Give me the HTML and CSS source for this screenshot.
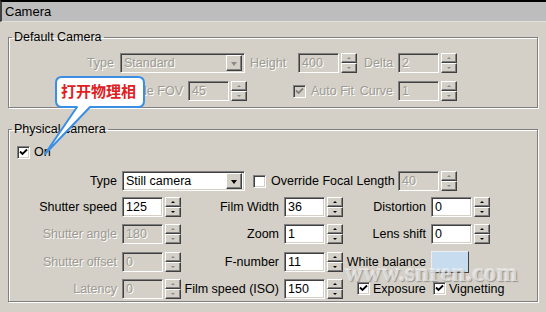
FILE: index.html
```html
<!DOCTYPE html>
<html>
<head>
<meta charset="utf-8">
<link rel="stylesheet" href="styles.css">
</head>
<body>
<div class="header">Camera</div>
<div class="panel">
  <fieldset class="group g-default">
    <legend>Default Camera</legend>
    <div class="row r-d1">
      <span class="lbl dis c-l1">Type</span>
      <div class="select dis w-sel1"><span class="sel-text">Standard</span><span class="ddbtn"><i></i></span></div>
      <span class="lbl dis c-h">Height</span>
      <div class="spin dis"><span class="field">400</span><span class="sbtns"><span class="sb up"><i></i></span><span class="sb dn"><i></i></span></span></div>
      <span class="lbl dis c-d">Delta</span>
      <div class="spin dis"><span class="field">2</span><span class="sbtns"><span class="sb up"><i></i></span><span class="sb dn"><i></i></span></span></div>
    </div>
    <div class="row r-d2">
      <span class="lbl dis c-fov">Override FOV</span>
      <div class="spin dis"><span class="field">45</span><span class="sbtns"><span class="sb up"><i></i></span><span class="sb dn"><i></i></span></span></div>
      <span class="chk dis c-af"><span class="box on"><svg viewBox="0 0 9 9" width="9" height="9"><path d="M1 3.5 L3.5 6 L8 1.5" /></svg></span><span class="lbl">Auto Fit</span></span>
      <span class="lbl dis c-curve">Curve</span>
      <div class="spin dis"><span class="field">1</span><span class="sbtns"><span class="sb up"><i></i></span><span class="sb dn"><i></i></span></span></div>
    </div>
  </fieldset>

  <fieldset class="group g-phys">
    <legend>Physical camera</legend>
    <div class="row r-on">
      <span class="chk"><span class="box on"><svg viewBox="0 0 9 9" width="9" height="9"><path d="M1 3.5 L3.5 6 L8 1.5" /></svg></span><span class="lbl">On</span></span>
    </div>
    <div class="row r-type">
      <span class="lbl c-l1p">Type</span>
      <div class="select w-sel2"><span class="sel-text">Still camera</span><span class="ddbtn"><i></i></span></div>
      <span class="chk c-ofl"><span class="box"></span><span class="lbl">Override Focal Length</span></span>
      <div class="spin dis"><span class="field">40</span><span class="sbtns"><span class="sb up"><i></i></span><span class="sb dn"><i></i></span></span></div>
    </div>
    <div class="grid">
      <span class="lbl c-l1p">Shutter speed</span>
      <div class="spin"><span class="field">125</span><span class="sbtns"><span class="sb up"><i></i></span><span class="sb dn"><i></i></span></span></div>
      <span class="lbl c-l2">Film Width</span>
      <div class="spin"><span class="field">36</span><span class="sbtns"><span class="sb up"><i></i></span><span class="sb dn"><i></i></span></span></div>
      <span class="lbl c-l3">Distortion</span>
      <div class="spin"><span class="field">0</span><span class="sbtns"><span class="sb up"><i></i></span><span class="sb dn"><i></i></span></span></div>

      <span class="lbl dis c-l1p">Shutter angle</span>
      <div class="spin dis"><span class="field">180</span><span class="sbtns"><span class="sb up"><i></i></span><span class="sb dn"><i></i></span></span></div>
      <span class="lbl c-l2">Zoom</span>
      <div class="spin"><span class="field">1</span><span class="sbtns"><span class="sb up"><i></i></span><span class="sb dn"><i></i></span></span></div>
      <span class="lbl c-l3">Lens shift</span>
      <div class="spin"><span class="field">0</span><span class="sbtns"><span class="sb up"><i></i></span><span class="sb dn"><i></i></span></span></div>

      <span class="lbl dis c-l1p">Shutter offset</span>
      <div class="spin dis"><span class="field">0</span><span class="sbtns"><span class="sb up"><i></i></span><span class="sb dn"><i></i></span></span></div>
      <span class="lbl c-l2">F-number</span>
      <div class="spin"><span class="field">11</span><span class="sbtns"><span class="sb up"><i></i></span><span class="sb dn"><i></i></span></span></div>
      <span class="lbl c-l3">White balance</span>
      <div class="swatch-cell"><span class="swatch"></span></div>

      <span class="lbl dis c-l1p">Latency</span>
      <div class="spin dis"><span class="field">0</span><span class="sbtns"><span class="sb up"><i></i></span><span class="sb dn"><i></i></span></span></div>
      <span class="lbl c-l2">Film speed (ISO)</span>
      <div class="spin"><span class="field">150</span><span class="sbtns"><span class="sb up"><i></i></span><span class="sb dn"><i></i></span></span></div>
      <div class="checks">
        <span class="chk c-exp"><span class="box on"><svg viewBox="0 0 9 9" width="9" height="9"><path d="M1 3.5 L3.5 6 L8 1.5" /></svg></span><span class="lbl">Exposure</span></span>
        <span class="chk"><span class="box on"><svg viewBox="0 0 9 9" width="9" height="9"><path d="M1 3.5 L3.5 6 L8 1.5" /></svg></span><span class="lbl">Vignetting</span></span>
      </div>
    </div>
  </fieldset>
</div>

<div class="watermark">www.snren.com</div>

<div class="callout">
  <svg class="callout-shape" width="110" height="82" viewBox="0 0 110 82">
    <path d="M22 2 H98 Q104 2 104 8 V26 Q104 32 98 32 H50 L5 79 L37 32 H22 Q16 32 16 26 V8 Q16 2 22 2 Z" fill="#fff" stroke="#3a8ee4" stroke-width="2" stroke-linejoin="round"/>
  </svg>
  <span class="callout-text">打开物理相</span>
</div>
</body>
</html>
```

FILE: styles.css
```css
* { box-sizing: border-box; }

body {
  margin: 0;
  width: 546px;
  height: 312px;
  overflow: hidden;
  position: relative;
  background: #d4d0c8;
  font-family: "Liberation Sans", Arial, sans-serif;
  font-size: 12.5px;
  color: #000;
}

.header {
  height: 22px;
  background: #bdbdbd;
  border-top: 2px solid #000;
  border-left: 2px solid #404040;
  border-bottom: 1px solid #e2e0da;
  padding-left: 3px;
  line-height: 19px;
  font-size: 13px;
}

.panel { padding: 0 8px; }

fieldset.group {
  margin: 0;
  padding: 0;
  min-width: 0;
  border: 1px solid #808080;
  box-shadow: inset 1px 1px 0 #fff, 1px 1px 0 #fff;
}

legend {
  margin-left: 3px;
  padding: 0 2px;
  line-height: 14px;
  height: 14px;
}

.g-default { margin-top: 8px !important; padding-bottom: 6px !important; }
.g-phys { margin-top: 14px !important; padding-bottom: 3px !important; }

.row { display: flex; align-items: center; height: 20px; }
.r-d1 { margin-top: 9px; }
.r-d2 { margin-top: 8px; }
.r-on { margin-top: 9px; height: 14px; padding-left: 8px; }
.r-type { margin-top: 12px; }

.lbl { white-space: nowrap; }
.dis, .dis .lbl, .dis .field, .dis .sel-text { color: #9d9a92; text-shadow: 1px 1px 0 #fff; }

.c-l1 { width: 105px; text-align: right; margin-right: 6px; }
.w-sel1 { width: 125px; }
.c-h { width: 53px; padding-left: 5px; }
.c-d { width: 41px; padding-left: 7px; }
.c-fov { width: 174px; text-align: right; margin-right: 5px; }
.c-af { width: 110px; padding-left: 46px; }
.c-curve { width: 41px; text-align: right; padding-right: 5px; }

.c-l1p { width: 108px; text-align: right; margin-right: 5px; }
.w-sel2 { width: 123px; }
.c-ofl { width: 153px; padding-left: 8px; }

.grid {
  display: grid;
  grid-template-columns: 113px 59px 103px 59px 88px 59px;
  grid-template-rows: 20px 20px 20px 20px;
  row-gap: 7px;
  margin-top: 6px;
  align-items: center;
}
.grid > :nth-child(n+13) { margin-top: 1px; }
.grid .c-l1p { width: auto; }
.c-l2 { text-align: right; padding-right: 5px; }
.c-l3 { text-align: right; padding-right: 5px; }

/* sunken field */
.field, .select, .box {
  border: 1px solid;
  border-color: #808080 #fff #fff #808080;
  box-shadow: inset 1px 1px 0 #404040, inset -1px -1px 0 #d4d0c8;
  background: #fff;
}
.dis .field, .select.dis { background: #d4d0c8; }
.dis .box { background: #d4d0c8; }

.spin { display: flex; height: 20px; width: 59px; }
.field {
  width: 41px;
  height: 20px;
  padding-left: 3px;
  line-height: 18px;
}
.sbtns {
  display: flex;
  flex-direction: column;
  width: 16px;
  height: 20px;
  margin-left: 2px;
}
.sb, .ddbtn {
  display: flex;
  align-items: center;
  justify-content: center;
  border: 1px solid;
  border-color: #fff #404040 #404040 #fff;
  box-shadow: inset -1px -1px 0 #808080;
  background: #d4d0c8;
}
.sb { flex: 1; }
.sb i { width: 0; height: 0; border-left: 2px solid transparent; border-right: 2px solid transparent; }
.sb.up i { border-bottom: 2px solid #000; }
.sb.dn i { border-top: 2px solid #000; }
.dis .sb.up i { border-bottom-color: #8a8a8a; }
.dis .sb.dn i { border-top-color: #8a8a8a; }

.select {
  display: flex;
  align-items: center;
  height: 20px;
  padding: 2px 2px 2px 3px;
}
.sel-text { flex: 1; white-space: nowrap; }
.ddbtn { width: 16px; height: 16px; }
.ddbtn i { width: 0; height: 0; border-left: 3.5px solid transparent; border-right: 3.5px solid transparent; border-top: 4px solid #000; margin-top: 1px; }
.dis .ddbtn i { border-top-color: #8a8a8a; }

.chk { display: flex; align-items: center; }
.box {
  width: 13px;
  height: 13px;
  flex: none;
  display: flex;
  align-items: center;
  justify-content: center;
  margin-right: 5px;
}
.box svg path { fill: none; stroke: #000; stroke-width: 1.8; }
.dis .box svg path { stroke: #808080; }
.r-on .box { margin-right: 4px; }

.checks { grid-column: 5 / span 2; display: flex; align-items: center; padding-left: 14px; }
.checks .chk { flex: none; }
.checks .box { margin-right: 3px; }
.c-exp { width: 76px; }

.swatch-cell { height: 20px; display: flex; align-items: center; }
.swatch {
  width: 38px;
  height: 22px;
  background: #c8dcf0;
  border: 1px solid;
  border-color: #e8eef6 #404040 #404040 #e8eef6;
}

.watermark {
  position: absolute;
  left: 345px;
  top: 259px;
  font-family: "Liberation Serif", serif;
  font-weight: bold;
  font-size: 25px;
  letter-spacing: 0.3px;
  color: rgba(238, 238, 238, 0.7);
  text-shadow: 1px 1px 1px rgba(90, 90, 90, 0.5), -1px -1px 0 rgba(255, 255, 255, 0.4);
  pointer-events: none;
}

.callout {
  position: absolute;
  left: 40px;
  top: 75px;
  width: 110px;
  height: 82px;
}
.callout-shape { display: block; }
.callout-text {
  position: absolute;
  left: 21px;
  top: 5px;
  font-family: "Noto Sans CJK SC", sans-serif;
  font-weight: bold;
  font-size: 15px;
  line-height: 22px;
  color: #e0201e;
}
```
